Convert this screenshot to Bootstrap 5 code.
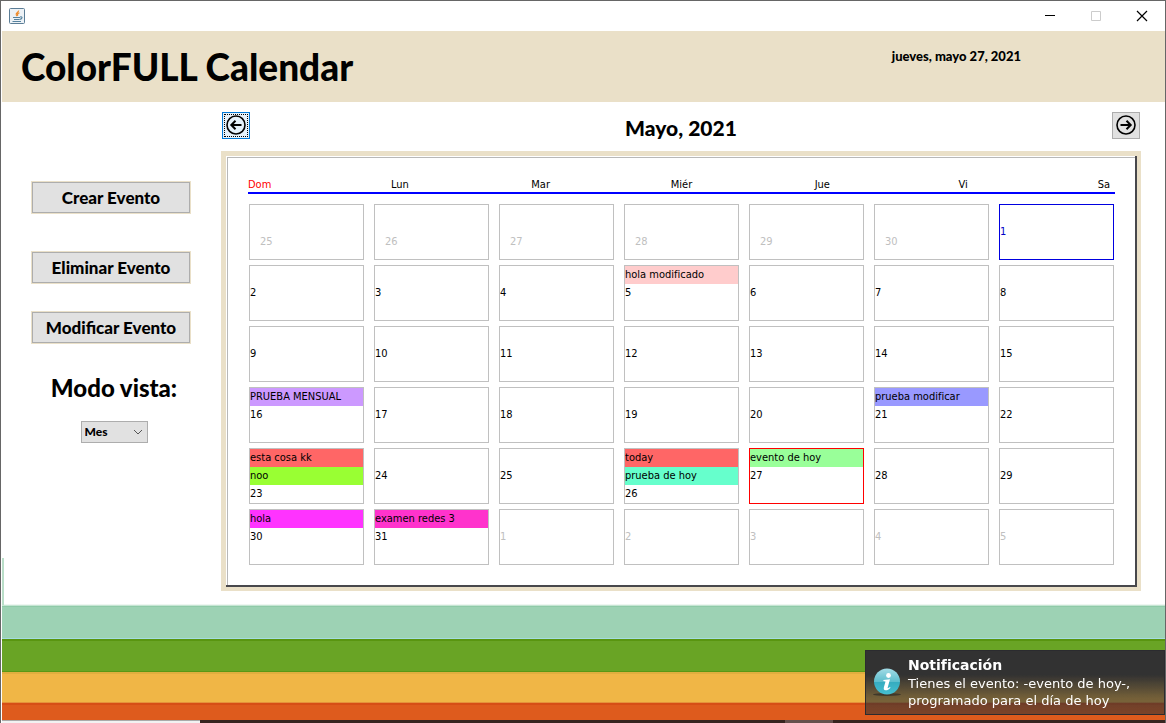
<!DOCTYPE html>
<html lang="es">
<head>
<meta charset="utf-8">
<meta name="viewport" content="width=device-width, initial-scale=1">
<title>ColorFULL Calendar</title>
<link href="https://cdn.jsdelivr.net/npm/bootstrap@5.3.0/dist/css/bootstrap.min.css" rel="stylesheet">
<style>
  :root { --sand: #eae0c8; --ui: "DejaVu Sans Condensed", "DejaVu Sans", sans-serif; --round: Lato, sans-serif; }
  body { font-family: var(--ui); font-size: 11px; line-height: 18px; color: #000; background: #fff; }
  .app-window { border: solid #666; border-width: 1px 1px 0 1px; }
  .title-bar { height: 30px; padding: 0 8px; }
  .win-controls { gap: 16px; }
  .win-controls button, .nav-arrow { background: none; border: 0; padding: 0; line-height: 0; }
  .win-controls button { width: 30px; height: 28px; }
  .app-header { background: var(--sand); border-left: 1px solid #fff; height: 71px; padding: 12px 144px 0 19px; }
  .app-header h1 { font: 900 37px/48px var(--round); }
  .app-header time { font: 900 13px/26px var(--round); }
  .side-panel { width: 220px; padding-top: 79px; }
  .side-panel::before { content: ""; position: absolute; left: 1px; bottom: 1px; width: 2px; height: 47px; background: #b9dec8; }
  .event-btn { width: 160px; height: 33px; border: 1px solid var(--sand); border-radius: 0; background: #e1e1e1; box-shadow: inset 0 0 0 1px #adadad; padding: 0; font: 900 17px/30px var(--round); color: #000; }
  .event-btn.remove { margin: 37px 0 27px; }
  .view-mode { padding-left: 6px; margin-top: 28px; gap: 17px; }
  .view-mode label { font: 900 24px/32px var(--round); }
  .view-select { width: 67px; height: 22px; border: 1px solid #adadad; border-radius: 0; padding: 0 0 0 3px; font: 900 12px/18px var(--round); color: #000; background-color: #e1e1e1; background-position: right 4px center; background-size: 10px;
    background-image: url("data:image/svg+xml,%3Csvg xmlns='http://www.w3.org/2000/svg' viewBox='0 0 10 10'%3E%3Cpath d='M1 3l4 4 4-4' fill='none' stroke='%23555'/%3E%3C/svg%3E"); }
  .calendar-side { padding: 10px 24px 15px 0; min-width: 0; }
  .month-bar { padding: 0 1px; margin-bottom: 7px; }
  .month-bar h2 { font: 900 21px/32px var(--round); }
  .nav-arrow { width: 28px; height: 27px; padding-bottom: 2px; background: #e1e1e1; border: 1px solid #adadad; }
  .nav-arrow.current { background: #e5f1fb; border-color: #0078d7; outline: 1px dotted #000; outline-offset: -3px; }
  .calendar-frame { background: var(--sand); padding: 5px 4px 4px 5px; }
  .calendar-sheet { background: #fff; padding: 21px 22px 22px; box-shadow: inset -2px -2px #48484c, inset 1px 1px #fff, inset 2px 2px #b8b8b8; }
  .weekdays { border-bottom: 2px solid #00f; line-height: 15px; }
  .weekdays span { width: 22px; text-align: center; }
  .weekdays .sunday { color: #f00; }
  .days { display: grid; grid-template-columns: repeat(7, minmax(0, 1fr)); gap: 5px 10px; padding: 10px 1px 0; }
  .day { height: 56px; border: 1px solid #c0c0c0; white-space: nowrap; overflow: hidden; }
  .day > span:first-child { margin-top: 18px; }
  .day.outside { color: #c0c0c0; }
  .day.previous > span:first-child { margin-top: 28px; padding-left: 10px; }
  .day.selected { border-color: #0000e0; color: #0000c8; }
  .day.today { border-color: #f00; }
  footer { border-left: 1px solid #fff; }
  .stripe-mint { height: 33px; background: #9dd2b4; border-top: 1px solid #8fcaa8; border-bottom: 1px solid #a4dce0; box-shadow: 0 -1px #c5e5d3, 0 -2px #eef6f1; }
  .stripe-green { height: 33px; background: #69a425; border-top: 2px solid #599510; border-bottom: 1px solid #599815; }
  .stripe-yellow { height: 31px; background: #f0b646; border-top: 2px solid #dfae40; border-bottom: 1px solid #e5923a; }
  .stripe-orange { height: 17px; background: #de5b1d; border-top: 2px solid #d64e16; }
  .desktop-edge { height: 3px; background: #36241f; }
  .desktop-edge div:first-child { width: 17%; background: #f2f2f2; border-top: 1px solid #aaa; }
  .desktop-edge div:last-child { width: 48px; margin-right: 332px; background: #65504c; }
  .notice { position: fixed; right: 1px; bottom: 8px; width: 300px; height: 65px; border: 1px solid #2b2b2f; gap: 7px; padding: 5px 0 0 7px; color: #fff; font: 13px/17px "DejaVu Sans", sans-serif;
    background: linear-gradient(#323232 38%, rgba(50,50,50,.65) 75%, rgba(50,50,50,.58)); }
  .notice strong { font-size: 14px; line-height: 19px; }
</style>
</head>
<body>
<div class="app-window d-flex flex-column min-vh-100">
  <div class="title-bar d-flex align-items-center justify-content-between">
    <svg width="16" height="16" viewBox="0 0 16 16" aria-hidden="true">
      <rect x=".5" y=".5" width="15" height="15" rx="1" fill="#edf2f6" stroke="#5b7d96"/>
      <path d="M9.6 2.5c.4 1.800-3.300 2.500-2.300 4.400l1 1.300M10.400 4.800C8.300 5.800 8.200 6.500 8.900 7.700" fill="none" stroke="#ef8a28" stroke-width="1.200"/>
      <path d="M4 9.500h7M5 11.500h5.500M3.500 13.500h8.500M11 9c3-1 2.500 2-.2 2.400" fill="none" stroke="#56829e" stroke-width="1.100"/>
    </svg>
    <div class="win-controls d-flex">
      <button type="button" aria-label="Minimizar"><svg width="12" height="12"><path d="M1 5.500h10" stroke="#000"/></svg></button>
      <button type="button" aria-label="Maximizar" disabled><svg width="12" height="12"><path d="M1.500 1.500h9v9h-9z" fill="none" stroke="#ccc"/></svg></button>
      <button type="button" aria-label="Cerrar"><svg width="12" height="12"><path d="M1 1l10 10M11 1L1 11" stroke="#000" stroke-width="1.200"/></svg></button>
    </div>
  </div>

  <header class="app-header d-flex justify-content-between align-items-start">
    <h1 class="m-0">ColorFULL Calendar</h1>
    <time datetime="2021-05-27">jueves, mayo 27, 2021</time>
  </header>

  <main class="d-flex flex-grow-1">
    <aside class="side-panel position-relative flex-shrink-0 d-flex flex-column align-items-center">
      <button type="button" class="btn event-btn">Crear Evento</button>
      <button type="button" class="btn event-btn remove">Eliminar Evento</button>
      <button type="button" class="btn event-btn">Modificar Evento</button>
      <div class="view-mode d-flex flex-column align-items-center">
        <label for="view">Modo vista:</label>
        <select class="form-select view-select" id="view"><option>Mes</option><option>Semana</option><option>Día</option></select>
      </div>
    </aside>

    <section class="calendar-side flex-grow-1">
      <div class="month-bar d-flex justify-content-between align-items-start">
        <button type="button" class="nav-arrow current" aria-label="Mes anterior"><svg width="20" height="20" viewBox="0 0 20 20" fill="none" stroke="#000"><circle cx="10" cy="10" r="9" stroke-width="1.600"/><path d="M15.500 10H5.500M9.500 5.800L5.300 10l4.200 4.200" stroke-width="2"/></svg></button>
        <h2 class="m-0">Mayo, 2021</h2>
        <button type="button" class="nav-arrow" aria-label="Mes siguiente"><svg width="20" height="20" viewBox="0 0 20 20" fill="none" stroke="#000"><circle cx="10" cy="10" r="9" stroke-width="1.600"/><path d="M4.500 10h10M10.500 5.800l4.200 4.200-4.200 4.200" stroke-width="2"/></svg></button>
      </div>
      <div class="calendar-frame">
        <div class="calendar-sheet">
          <div class="weekdays d-flex justify-content-between"><span class="sunday">Dom</span><span>Lun</span><span>Mar</span><span>Miér</span><span>Jue</span><span>Vi</span><span>Sa</span></div>
          <div class="days" id="days"></div>
        </div>
      </div>
    </section>
  </main>

  <footer>
    <div class="stripe-mint"></div>
    <div class="stripe-green"></div>
    <div class="stripe-yellow"></div>
    <div class="stripe-orange"></div>
    <div class="desktop-edge d-flex justify-content-between"><div></div><div></div></div>
  </footer>
</div>

<div class="notice d-flex" role="status">
  <svg class="flex-shrink-0" width="28" height="28" viewBox="0 0 28 28" style="margin-top:12px" aria-hidden="true">
    <defs><linearGradient id="orb" x2="0" y2="1"><stop stop-color="#a3dce6"/><stop offset=".5" stop-color="#5dbecd"/><stop offset=".51" stop-color="#35abbf"/><stop offset="1" stop-color="#45bfd0"/></linearGradient></defs>
    <ellipse cx="14" cy="26.500" rx="14" ry="1.500" fill="#222" opacity=".6"/>
    <circle cx="14" cy="13.500" r="13" fill="url(#orb)"/>
    <circle cx="15.500" cy="7.500" r="2.400" fill="#fff"/>
    <path d="M10.500 12l6.500-.8-2.300 8.300c-.2 1 .6.800 2.300-.500l.5.800c-2 2-3.500 2.700-5 2.500-1.800-.2-2-1.500-1.600-3l1.600-5.700-2.200-.6z" fill="#fff"/>
  </svg>
  <div><strong class="d-block">Notificación</strong>Tienes el evento: -evento de hoy-,<br>programado para el día de hoy</div>
</div>

<script>
  // Events of May 2021, keyed by day of the month
  const events = {
    5: [['hola modificado', '#ffcccc']],
    16: [['PRUEBA MENSUAL', '#cc99ff']],
    21: [['prueba modificar', '#9999ff']],
    23: [['esta cosa kk', '#ff6666'], ['noo', '#99ff33']],
    26: [['today', '#ff6666'], ['prueba de hoy', '#66ffcc']],
    27: [['evento de hoy', '#99ff99']],
    30: [['hola', '#ff33ff']],
    31: [['examen redes 3', '#ff33cc']]
  };
  const grid = document.getElementById('days');
  for (let i = 0; i < 42; i++) {
    const date = new Date(2021, 3, 25 + i), n = date.getDate(), month = date.getMonth();
    const cell = document.createElement('div');
    cell.className = 'day d-flex flex-column' + (month !== 4 ? ' outside' : '') + (month === 3 ? ' previous' : '');
    if (month === 4) {
      if (n === 1) cell.classList.add('selected');
      if (n === 27) cell.classList.add('today');
      for (const [title, color] of events[n] || []) {
        const bar = document.createElement('div');
        bar.textContent = title;
        bar.style.background = color;
        cell.append(bar);
      }
    }
    const number = document.createElement('span');
    number.textContent = n;
    cell.append(number);
    grid.append(cell);
  }
</script>
<script src="https://cdn.jsdelivr.net/npm/bootstrap@5.3.0/dist/js/bootstrap.bundle.min.js"></script>
</body>
</html>
